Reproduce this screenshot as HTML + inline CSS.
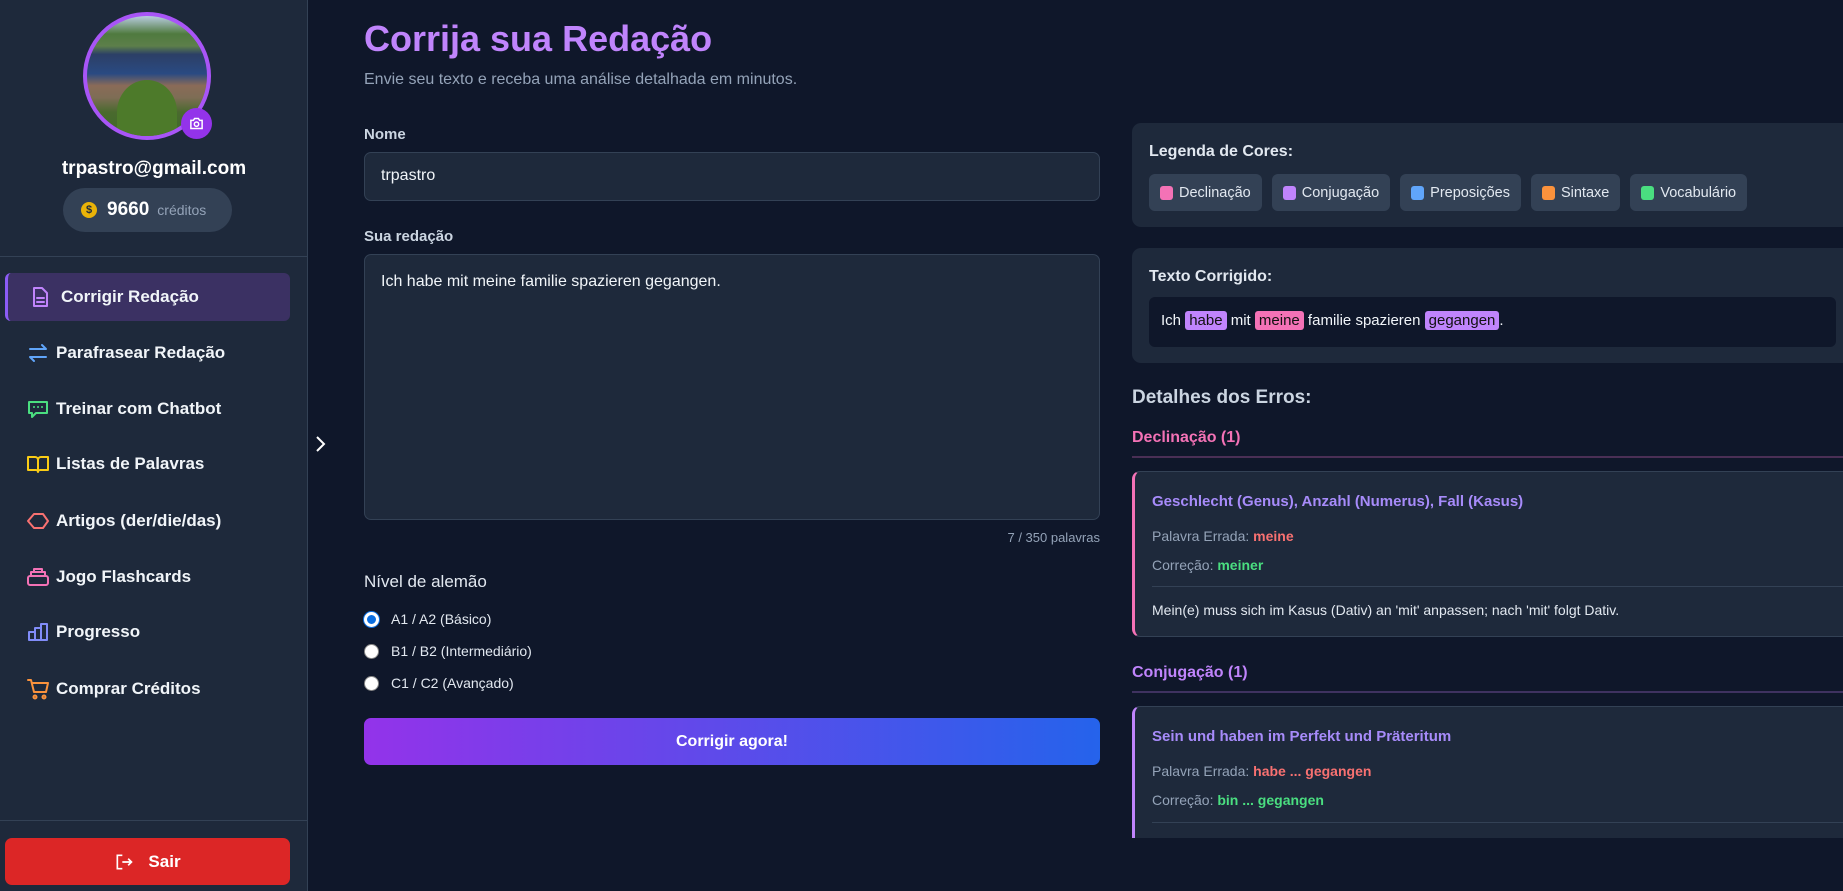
<!DOCTYPE html>
<html><head><meta charset="utf-8"><style>
*{box-sizing:border-box;margin:0;padding:0}
body{width:1843px;height:891px;overflow:hidden;background:#0f172a;font-family:"Liberation Sans",sans-serif;color:#e2e8f0;position:relative}
.a{position:absolute}
.sb{left:0;top:0;width:308px;height:891px;background:#1e293b;border-right:1px solid #334155}
.nav{left:5px;width:285px;height:48px;display:flex;align-items:center;font-size:17px;font-weight:bold;color:#f1f5f9}
.nav svg{position:absolute;left:21px;width:24px;height:24px;fill:none;stroke-width:2;stroke-linecap:round;stroke-linejoin:round}
.nav span{position:absolute;left:51px}
.lbl{font-size:15px;font-weight:bold;color:#cbd5e1}
.box{background:#1e293b;border:1px solid #334155;border-radius:7px}
.card{background:#1e293b;border-radius:9px}
.chip{display:inline-flex;align-items:center;height:37px;padding:0 11px;background:#334155;border-radius:6px;font-size:14.5px;color:#e2e8f0;margin-right:10px}
.chip i{display:inline-block;width:13px;height:14px;border-radius:3px;margin-right:6px}
.hl{padding:1px 4px;border-radius:3px;color:#111}
.ec{background:#1e293b;border:1px solid #334155;border-radius:8px;overflow:hidden}
.ec .t{font-size:15px;font-weight:bold;color:#a78bfa}
.ec .r{font-size:14px;color:#94a3b8}
.radio{display:flex;align-items:center;font-size:14px;color:#e2e8f0}
.radio i{display:inline-block;width:15px;height:15px;border-radius:50%;background:#fff;margin-right:12px;border:1px solid #888}
</style></head><body>
<div class="a sb"></div>
<div class="a" style="left:83px;top:12px;width:128px;height:128px;border-radius:50%;border:4px solid #a855f7;overflow:hidden;background:linear-gradient(180deg,#b9cde0 0%,#4f7a3f 15%,#5d7f4a 25%,#2c3f66 32%,#2a4a82 48%,#8a6b58 58%,#7e6d55 68%,#4a6a2e 80%,#3e6b2a 100%)">
<div class="a" style="left:30px;top:64px;width:60px;height:64px;border-radius:50% 50% 10% 10%;background:#4d7a2a"></div>
</div>
<div class="a" style="left:181px;top:108px;width:31px;height:31px;border-radius:50%;background:#9333ea;display:flex;align-items:center;justify-content:center">
<svg width="15" height="13" viewBox="0 0 24 20" fill="none" stroke="#fff" stroke-width="2.4"><path d="M3 5h4l2-3h6l2 3h4v13H3z"/><circle cx="12" cy="11" r="3.5"/></svg></div>
<div class="a" style="left:0;width:308px;top:158px;text-align:center;font-size:19px;font-weight:bold;color:#fff">trpastro@gmail.com</div>
<div class="a" style="left:63px;top:188px;width:169px;height:44px;border-radius:22px;background:#334155;display:flex;align-items:center;padding-left:18px">
<div style="width:16px;height:16px;border-radius:50%;background:#eab308;color:#1e293b;font-size:11px;font-weight:bold;text-align:center;line-height:16px">$</div>
<span style="margin-left:10px;font-size:19px;font-weight:bold;color:#fff">9660</span><span style="margin-left:8px;font-size:14px;color:#94a3b8">créditos</span></div>
<div class="a" style="left:0;top:256px;width:307px;height:1px;background:#334155"></div>

<div class="a nav" style="top:273px;background:#3b3163;border-left:3px solid #8b5cf6;border-radius:6px"><svg style="left:20px" stroke="#c084fc" viewBox="0 0 24 24"><path d="M6 3h8l5 5v13H6z"/><path d="M9 13h7M9 17h7"/></svg><span style="left:53px">Corrigir Redação</span></div>
<div class="a nav" style="top:329px"><svg stroke="#60a5fa" viewBox="0 0 24 24"><path d="M4 8h16l-4-4M20 16H4l4 4"/></svg><span>Parafrasear Redação</span></div>
<div class="a nav" style="top:385px"><svg stroke="#4ade80" viewBox="0 0 24 24"><path d="M3 5h18v11H10l-4 4v-4H3z"/><path d="M8 10h.01M12 10h.01M16 10h.01"/></svg><span>Treinar com Chatbot</span></div>
<div class="a nav" style="top:440px"><svg stroke="#facc15" viewBox="0 0 24 24"><path d="M2 5h7a3 3 0 0 1 3 3v12a2 2 0 0 0-2-2H2zM22 5h-7a3 3 0 0 0-3 3v12a2 2 0 0 1 2-2h8z"/></svg><span>Listas de Palavras</span></div>
<div class="a nav" style="top:497px"><svg stroke="#f87171" viewBox="0 0 24 24"><path d="M2 12l6-7h9l5 7-5 7H8z"/></svg><span>Artigos (der/die/das)</span></div>
<div class="a nav" style="top:553px"><svg stroke="#f472b6" viewBox="0 0 24 24"><rect x="2" y="11" width="20" height="9" rx="2"/><path d="M5 11V7h14v4M8 7V4h8v3"/></svg><span>Jogo Flashcards</span></div>
<div class="a nav" style="top:608px"><svg stroke="#818cf8" viewBox="0 0 24 24"><path d="M3 20V12h6v8M9 20V8h6v12M15 20V4h6v16H3"/></svg><span>Progresso</span></div>
<div class="a nav" style="top:665px"><svg stroke="#fb923c" viewBox="0 0 24 24"><path d="M2 3h3l3 12h12l2-9H6"/><circle cx="9" cy="20" r="1.5"/><circle cx="18" cy="20" r="1.5"/></svg><span>Comprar Créditos</span></div>

<div class="a" style="left:0;top:820px;width:307px;height:1px;background:#334155"></div>
<div class="a" style="left:5px;top:838px;width:285px;height:47px;background:#dc2626;border-radius:7px;display:flex;align-items:center;justify-content:center;font-size:17px;font-weight:bold;color:#fff">
<svg width="20" height="20" viewBox="0 0 24 24" fill="none" stroke="#fff" stroke-width="2"><path d="M10 4H4v16h6M10 12h11M17 8l4 4-4 4"/></svg><span style="margin-left:14px">Sair</span></div>

<svg class="a" style="left:313px;top:435px" width="14" height="18" viewBox="0 0 14 18" fill="none" stroke="#fff" stroke-width="2"><path d="M4 2l7 7-7 7"/></svg>

<div class="a" style="left:364px;top:18px;font-size:36px;font-weight:bold;color:#c084fc">Corrija sua Redação</div>
<div class="a" style="left:364px;top:71px;font-size:16px;color:#94a3b8">Envie seu texto e receba uma análise detalhada em minutos.</div>
<div class="a lbl" style="left:364px;top:126px">Nome</div>
<div class="a box" style="left:364px;top:152px;width:736px;height:49px;padding:14px 16px;font-size:16px;color:#f1f5f9">trpastro</div>
<div class="a lbl" style="left:364px;top:228px">Sua redação</div>
<div class="a box" style="left:364px;top:254px;width:736px;height:266px;padding:18px 16px;font-size:16px;color:#f1f5f9">Ich habe mit meine familie spazieren gegangen.</div>
<div class="a" style="left:900px;width:200px;text-align:right;top:530px;font-size:13px;color:#94a3b8">7 / 350 palavras</div>
<div class="a" style="left:364px;top:572px;font-size:17px;color:#e2e8f0">Nível de alemão</div>
<div class="a radio" style="left:364px;top:611px"><i style="background:#0b6ee0;border:3px solid #fff;box-shadow:0 0 0 1px #0b6ee0"></i>A1 / A2 (Básico)</div>
<div class="a radio" style="left:364px;top:643px"><i></i>B1 / B2 (Intermediário)</div>
<div class="a radio" style="left:364px;top:675px"><i></i>C1 / C2 (Avançado)</div>
<div class="a" style="left:364px;top:718px;width:736px;height:47px;border-radius:7px;background:linear-gradient(90deg,#9333ea,#2563eb);display:flex;align-items:center;justify-content:center;font-size:16px;font-weight:bold;color:#fff">Corrigir agora!</div>

<div class="a card" style="left:1132px;top:123px;width:720px;height:104px;padding:20px 17px">
<div style="font-size:16px;font-weight:bold;color:#e2e8f0;margin-bottom:13px">Legenda de Cores:</div>
<div style="display:flex"><div class="chip"><i style="background:#f472b6"></i>Declinação</div><div class="chip"><i style="background:#c084fc"></i>Conjugação</div><div class="chip"><i style="background:#60a5fa"></i>Preposições</div><div class="chip"><i style="background:#fb923c"></i>Sintaxe</div><div class="chip"><i style="background:#4ade80"></i>Vocabulário</div></div>
</div>
<div class="a card" style="left:1132px;top:248px;width:720px;height:115px;padding:20px 17px">
<div style="font-size:16px;font-weight:bold;color:#e2e8f0">Texto Corrigido:</div>
<div class="a" style="left:17px;top:49px;width:687px;height:50px;background:#0f172a;border-radius:6px;padding:15px 12px;font-size:15px;color:#f1f5f9">Ich <span class="hl" style="background:#c084fc">habe</span> mit <span class="hl" style="background:#f472b6">meine</span> familie spazieren <span class="hl" style="background:#c084fc">gegangen</span>.</div>
</div>
<div class="a" style="left:1132px;top:387px;font-size:19px;font-weight:bold;color:#cbd5e1">Detalhes dos Erros:</div>
<div class="a" style="left:1132px;top:429px;font-size:16px;font-weight:bold;color:#f472b6">Declinação (1)</div>
<div class="a" style="left:1132px;top:456px;width:720px;height:2px;background:#4a2f55"></div>
<div class="a ec" style="left:1132px;top:471px;width:720px;height:166px;border-left:3px solid #f472b6">
<div class="a t" style="left:17px;top:21px">Geschlecht (Genus), Anzahl (Numerus), Fall (Kasus)</div>
<div class="a r" style="left:17px;top:56px">Palavra Errada: <b style="color:#f87171">meine</b></div>
<div class="a r" style="left:17px;top:85px">Correção: <b style="color:#4ade80">meiner</b></div>
<div class="a" style="left:17px;top:114px;width:700px;height:1px;background:#334155"></div>
<div class="a" style="left:17px;top:130px;font-size:14px;color:#e2e8f0">Mein(e) muss sich im Kasus (Dativ) an 'mit' anpassen; nach 'mit' folgt Dativ.</div>
</div>
<div class="a" style="left:1132px;top:664px;font-size:16px;font-weight:bold;color:#c084fc">Conjugação (1)</div>
<div class="a" style="left:1132px;top:691px;width:720px;height:2px;background:#3f3260"></div>
<div class="a ec" style="left:1132px;top:706px;width:720px;height:160px;border-left:3px solid #c084fc">
<div class="a t" style="left:17px;top:21px">Sein und haben im Perfekt und Präteritum</div>
<div class="a r" style="left:17px;top:56px">Palavra Errada: <b style="color:#f87171">habe ... gegangen</b></div>
<div class="a r" style="left:17px;top:85px">Correção: <b style="color:#4ade80">bin ... gegangen</b></div>
<div class="a" style="left:17px;top:115px;width:700px;height:1px;background:#334155"></div>
</div>
<div class="a" style="left:1130px;top:838px;width:713px;height:53px;background:#0f172a"></div>
</body></html>
